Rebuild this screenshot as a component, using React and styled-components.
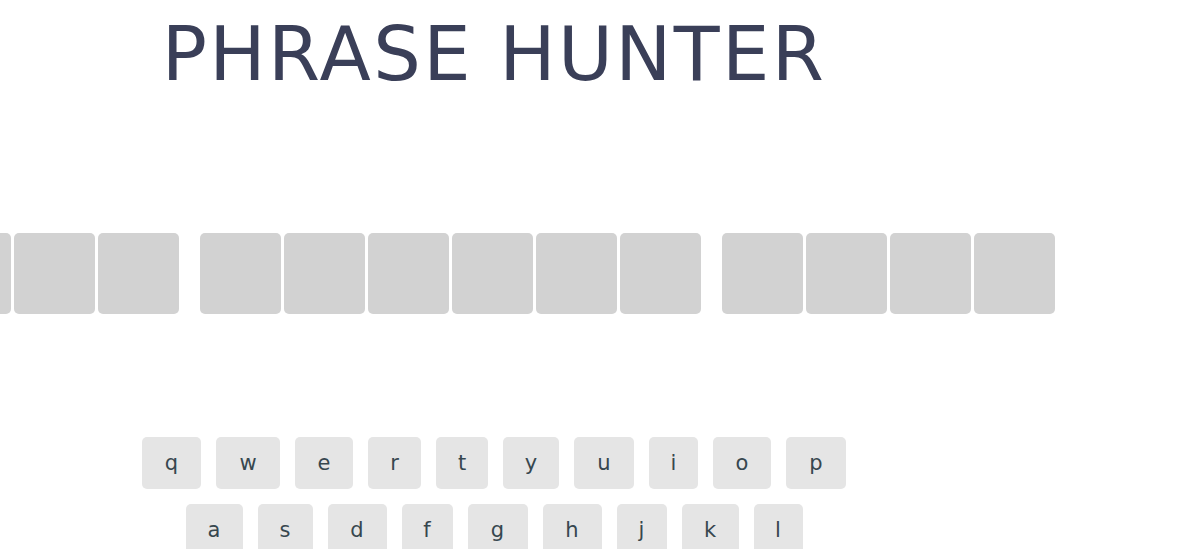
import React from "react";
import styled, { createGlobalStyle } from "styled-components";

const GlobalStyle = createGlobalStyle`
  body {
    margin: 0;
    background: #fff;
    font-family: "DejaVu Sans", "Liberation Sans", sans-serif;
    overflow: hidden;
  }
`;

// word lengths of the hidden phrase: 3, 6 and 4 letters
const phrase = "abc abcdef abcd";

const rows = [
  [
    ["q", 59], ["w", 64], ["e", 58], ["r", 53], ["t", 52],
    ["y", 56], ["u", 60], ["i", 49], ["o", 58], ["p", 60],
  ],
  [
    ["a", 57], ["s", 55], ["d", 59], ["f", 51], ["g", 60],
    ["h", 59], ["j", 50], ["k", 57], ["l", 49],
  ],
];

const Main = styled.div`
  width: 988px;
  display: flex;
  flex-direction: column;
  align-items: center;
`;

const Header = styled.h1`
  margin: 11px 0 0;
  font-size: 75px;
  line-height: 87px;
  font-weight: 400;
  letter-spacing: 2.4px;
  color: #3a3f58;
`;

const Phrase = styled.ul`
  list-style: none;
  margin: 135px 0 0;
  padding: 0;
  width: 100%;
  display: flex;
  justify-content: center;
`;

const Tile = styled.li`
  flex: 0 0 auto;
  width: ${(p) => (p.$space ? "15px" : "81px")};
  height: 81px;
  margin-right: 3px;
  border-radius: 5px;
  background: ${(p) => (p.$space ? "transparent" : "#d2d2d2")};
`;

const Keyboard = styled.div`
  margin-top: 123px;
  display: flex;
  flex-direction: column;
  align-items: center;
  gap: 15px;
`;

const KeyRow = styled.div`
  display: flex;
  gap: 15px;
`;

const Key = styled.button`
  width: ${(p) => p.$w}px;
  height: 52px;
  padding: 0;
  border: none;
  border-radius: 5px;
  background: #e5e5e5;
  color: #37474f;
  font-family: "DejaVu Sans", "Liberation Sans", sans-serif;
  font-size: 21px;
  display: flex;
  align-items: center;
  justify-content: center;
  cursor: pointer;
`;

export default function App() {
  return (
    <Main>
      <GlobalStyle />
      <Header>PHRASE HUNTER</Header>
      <Phrase>
        {phrase.split("").map((ch, i) => (
          <Tile key={i} $space={ch === " "} />
        ))}
      </Phrase>
      <Keyboard>
        {rows.map((row, r) => (
          <KeyRow key={r}>
            {row.map(([k, w]) => (
              <Key key={k} $w={w}>
                {k}
              </Key>
            ))}
          </KeyRow>
        ))}
      </Keyboard>
    </Main>
  );
}
